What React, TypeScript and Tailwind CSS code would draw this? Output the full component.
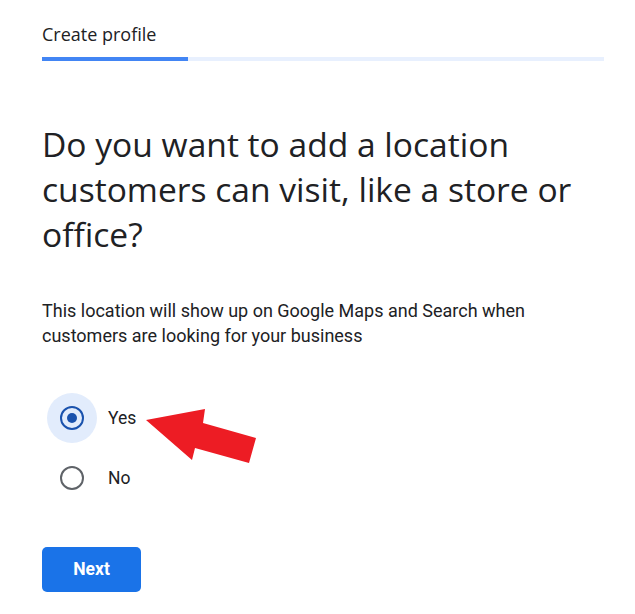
export default function App() {
  return (
    <div className="w-[635px] h-[614px] bg-white relative overflow-hidden" style={{ fontFamily: 'Roboto, "Liberation Sans", sans-serif' }}>
      <div className="pl-[42px] pr-[31px] pt-[22px]">
        <div className="text-[18px] leading-[24px] text-[#202124] font-['Open_Sans',sans-serif]">Create profile</div>
        <div className="mt-[11px] h-[4px] bg-[#e8f0fe] flex">
          <div className="w-[146px] h-full bg-[#4285f4]" />
        </div>
        <h1 className="mt-[61px] text-[33.6px] leading-[45px] text-[#202124] font-['Open_Sans',sans-serif] font-normal">
          Do you want to add a location customers can visit, like a store or office?
        </h1>
        <p className="mt-[41px] text-[18px] leading-[25px] text-[#202124] w-[540px]">
          This location will show up on Google Maps and Search when customers are looking for your business
        </p>
        <div className="mt-[45px] flex flex-col gap-[10px] ml-[5px]">
          <div className="flex items-center h-[50px]">
            <div className="w-[50px] h-[50px] rounded-full bg-[#e2ecfc] flex items-center justify-center">
              <div className="w-[24px] h-[24px] rounded-full border-2 border-[#1a52ad] flex items-center justify-center">
                <div className="w-[10px] h-[10px] rounded-full bg-[#1a52ad]" />
              </div>
            </div>
            <span className="ml-[11px] text-[17.5px] text-[#202124]">Yes</span>
          </div>
          <div className="flex items-center h-[50px]">
            <div className="w-[50px] h-[50px] flex items-center justify-center">
              <div className="w-[24px] h-[24px] rounded-full border-2 border-[#5f6368]" />
            </div>
            <span className="ml-[11px] text-[17.5px] text-[#202124]">No</span>
          </div>
        </div>
        <button className="mt-[44px] w-[99px] h-[45px] rounded-[5px] bg-[#1a73e8] text-white text-[17.5px] font-bold">Next</button>
      </div>
      <svg className="absolute left-0 top-0 pointer-events-none" width="635" height="614">
        <polygon points="146,420 205,409 203,423 256,438 249,463 195,448 192,460" fill="#ed1c24" />
      </svg>
    </div>
  );
}
